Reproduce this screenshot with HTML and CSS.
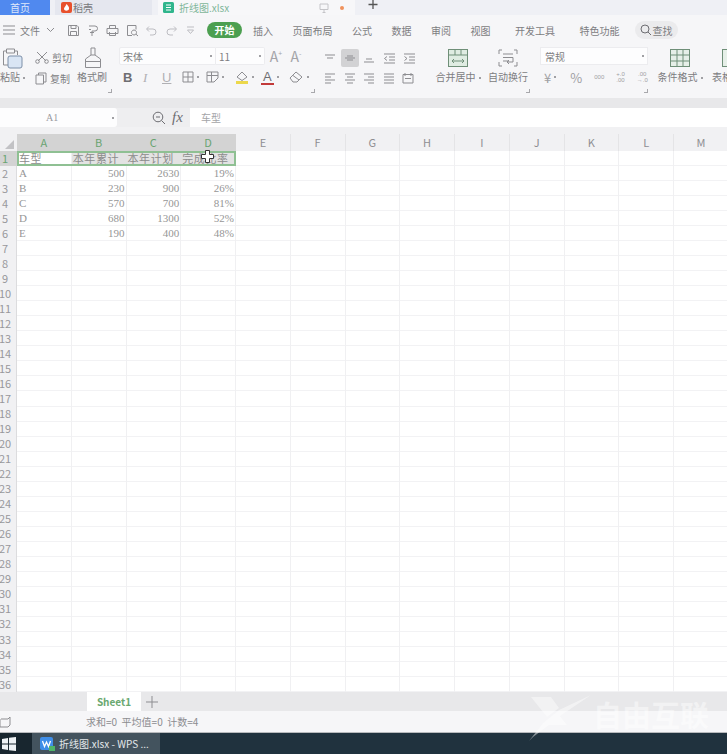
FILE: index.html
```html
<!DOCTYPE html>
<html lang="zh">
<head>
    <meta charset="UTF-8">
    <title>折线图.xlsx - WPS</title>
    <link rel="stylesheet" href="styles.css">
</head>
<body>
    <div class="tabbar">
        <div class="tab home">首页</div>
        <div class="tab shell">
            <svg class="tab-logo" width="11" height="11" viewBox="0 0 11 11"><rect width="11" height="11" rx="2" fill="#e8502c"/><path d="M5.5 2C7 4 8.5 5 8 7 7.500 9 3.500 9.500 3 7 2.800 5.500 4.500 4.500 5.500 2Z" fill="#fff"/></svg>
            稻壳
        </div>
        <div class="tab doc">
            <svg class="tab-logo" width="11" height="11" viewBox="0 0 11 11"><rect width="11" height="11" rx="1.500" fill="#2fb58c"/><path d="M3 3H8M3 5.500H8M8 8H3" stroke="#fff" stroke-width="1.200" fill="none"/></svg>
            <span class="doc-name">折线图.xlsx</span>
            <svg class="doc-mark" width="10" height="10" viewBox="0 0 10 10"><path d="M1 1H9V6.500H1ZM5 6.500V9.500M3.500 9.500H6.500" stroke="#c4c4c8" fill="none"/></svg>
            <span class="doc-dot"></span>
        </div>
        <svg class="tab-add" width="10" height="10" viewBox="0 0 10 10"><path d="M5 0V9M.5 4.500H9.500" stroke="#555" stroke-width="1.300" fill="none"/></svg>
    </div>

    <div class="menubar">
        <svg class="ic burger" width="12" height="10" viewBox="0 0 12 10"><path d="M0 1H12M0 5H12M0 9H12"/></svg>
        <span class="file-menu">文件</span>
        <svg class="ic chev" width="9" height="6" viewBox="0 0 9 6"><path d="M1 1L4.500 4.500 8 1"/></svg>
        <div class="quick">
            <svg class="ic" width="13" height="13" viewBox="0 0 13 13"><path d="M1.500 1.500H10L11.500 3V11.500H1.500ZM4 1.500V4.500H9V1.500M3.500 11.500V7.500H9.500V11.500"/></svg>
            <svg class="ic" width="13" height="13" viewBox="0 0 13 13"><path d="M2 2H8A2.500 2.500 0 0 1 8 7H5V12M2 5.500H4M3 8.500H7"/></svg>
            <svg class="ic" width="13" height="13" viewBox="0 0 13 13"><path d="M3.500 4V1.500H9.500V4M1 4.500H12V9.500H1ZM3.500 8V11.500H9.500V8"/></svg>
            <svg class="ic" width="13" height="13" viewBox="0 0 13 13"><path d="M10 5.500V1.500H1.500V11.500H6M8 6A2.500 2.500 0 1 0 8.010 6M9.800 10L12 12"/></svg>
            <svg class="ic faint" width="13" height="13" viewBox="0 0 13 13"><path d="M2 5H8A3 3 0 0 1 8 11H5M4 2.500L1.500 5 4 7.500"/></svg>
            <svg class="ic faint" width="13" height="13" viewBox="0 0 13 13"><path d="M11 5H5A3 3 0 0 0 5 11H8M9 2.500L11.500 5 9 7.500"/></svg>
            <svg class="ic faint" width="13" height="13" viewBox="0 0 13 13"><path d="M3 3H10M3.500 6H9.500L6.500 9.500Z"/></svg>
        </div>
        <div class="start">开始</div>
        <nav class="menu">
            <span>插入</span>
            <span>页面布局</span>
            <span>公式</span>
            <span>数据</span>
            <span>审阅</span>
            <span>视图</span>
            <span class="wide">开发工具</span>
            <span class="wide">特色功能</span>
        </nav>
        <div class="find">
            <svg class="ic dark" width="12" height="12" viewBox="0 0 12 12"><circle cx="5" cy="5" r="4"/><path d="M8 8L11 11"/></svg>
            查找
        </div>
    </div>

    <div class="ribbon">
        <div class="group paste">
            <svg class="ic" width="21" height="22" viewBox="0 0 21 22"><path d="M4 3H1.500V17H6M13 3H15.500V7M4.500 1H12.500V5H4.500Z"/><rect x="6" y="8" width="14" height="12" rx="2" fill="#d9e5f4" stroke="#7d8fa8"/></svg>
            <div class="lbl">粘贴<i class="dot"></i></div>
        </div>
        <div class="group clip">
            <div class="clip-row">
                <svg class="ic" width="14" height="13" viewBox="0 0 14 13"><path d="M2 1L11 10M12 1L3 10"/><circle cx="2.500" cy="10.500" r="1.800"/><circle cx="11.500" cy="10.500" r="1.800"/></svg>
                剪切
            </div>
            <div class="clip-row">
                <svg class="ic" width="12" height="13" viewBox="0 0 12 13"><path d="M3.500 3V1H11V10H9M1 3H8.500V12H1Z"/></svg>
                复制
            </div>
        </div>
        <div class="group brush">
            <svg class="ic" width="18" height="22" viewBox="0 0 18 22"><path d="M7 1H11V8H7ZM7 8L1.500 12V20.500H16.500V12L11 8M1.500 14.500H16.500"/></svg>
            <div class="lbl">格式刷</div>
            <i class="corner"></i>
        </div>
        <div class="group font">
            <div class="font-top">
                <div class="select font-name">宋体<i class="dot"></i></div>
                <div class="select font-size">11<i class="dot"></i></div>
                <span class="grow">A<sup>+</sup></span>
                <span class="grow">A<sup>-</sup></span>
            </div>
            <div class="font-bottom">
                <span class="fmt bold">B</span>
                <span class="fmt ital">I</span>
                <span class="fmt under">U</span>
                <svg class="ic" width="12" height="12" viewBox="0 0 12 12"><path d="M1 1H11V11H1ZM1 6H11M6 1V11"/></svg><i class="dot"></i>
                <svg class="ic" width="13" height="12" viewBox="0 0 13 12"><path d="M1 1H12V7L8 11H1ZM1 4.500H12M5.500 1V11"/></svg><i class="dot"></i>
                <svg class="ic fill-ic" width="14" height="13" viewBox="0 0 14 13"><path d="M7 1L12 6 7 9.500 2 6Z"/><rect x="1" y="10" width="12" height="3" fill="#ecd84c" stroke="none"/></svg><i class="dot"></i>
                <span class="fmt color-a">A</span><i class="dot"></i>
                <svg class="ic erase-ic" width="15" height="12" viewBox="0 0 15 12"><path d="M1 7L7 1 13 6 8 11H4ZM4 4.500L10 9"/></svg><i class="dot"></i>
            </div>
            <i class="corner"></i>
        </div>
        <div class="group align">
            <div class="align-row">
                <svg class="ic" width="12" height="12" viewBox="0 0 12 12"><path d="M1 3H11M3 6H9"/></svg>
                <span class="on"><svg class="ic" width="12" height="12" viewBox="0 0 12 12"><path d="M1 6H11M3 4H9M3 8H9"/></svg></span>
                <svg class="ic" width="12" height="12" viewBox="0 0 12 12"><path d="M3 7H9M1 10H11"/></svg>
                <svg class="ic" width="13" height="12" viewBox="0 0 13 12"><path d="M1 2H12M6 5H12M6 8H12M1 11H12M4 4.500L1.500 6.500 4 8.500"/></svg>
                <svg class="ic" width="13" height="12" viewBox="0 0 13 12"><path d="M1 2H12M6 5H12M6 8H12M1 11H12M1.500 4.500L4 6.500 1.500 8.500"/></svg>
            </div>
            <div class="align-row">
                <svg class="ic" width="12" height="12" viewBox="0 0 12 12"><path d="M1 2H11M1 5H7M1 8H11M1 11H7"/></svg>
                <svg class="ic" width="12" height="12" viewBox="0 0 12 12"><path d="M1 2H11M3 5H9M1 8H11M3 11H9"/></svg>
                <svg class="ic" width="12" height="12" viewBox="0 0 12 12"><path d="M1 2H11M5 5H11M1 8H11M5 11H11"/></svg>
                <svg class="ic" width="12" height="12" viewBox="0 0 12 12"><path d="M1 2H11M1 5H11M1 8H11M1 11H11"/></svg>
                <svg class="ic" width="12" height="12" viewBox="0 0 12 12"><path d="M1 2.500H11V11H1ZM3 1V4M9 1V4M3 6.500H9"/></svg>
            </div>
        </div>
        <div class="group big merge">
            <svg width="20" height="18" viewBox="0 0 20 18"><rect x=".5" y=".5" width="19" height="17" fill="#dfece2" stroke="#6f8f78"/><path d="M.5 6H19.500M7 .5V6M13 .5V6M4 12H16M4 12L6 10M4 12L6 14M16 12L14 10M16 12L14 14" stroke="#6f8f78" fill="none"/></svg>
            <div class="lbl">合并居中<i class="dot"></i></div>
        </div>
        <div class="group big wrap">
            <svg class="ic" width="20" height="18" viewBox="0 0 20 18"><path d="M1 5V1H4M16 1H19V5M1 13V17H4M19 13V17H16M5 5H15M5 8.500H15M5 12H11M15 8.500V13H9M11 11L9 13 11 15"/></svg>
            <div class="lbl">自动换行</div>
            <i class="corner"></i>
        </div>
        <div class="group number">
            <div class="select num-format">常规<i class="dot"></i></div>
            <div class="num-row">
                <span class="num-cur">¥</span><i class="dot"></i>
                <span class="num-pct">%</span>
                <span class="num-small">000</span>
                <span class="num-small">+.0<br>.00</span>
                <span class="num-small">.00<br>→.0</span>
            </div>
            <i class="corner"></i>
        </div>
        <div class="group big cond">
            <svg width="20" height="18" viewBox="0 0 20 18"><rect x=".5" y=".5" width="19" height="17" fill="#e6efe8" stroke="#6f8f78"/><path d="M.5 6H19.500M.5 12H19.500M7 .5V17.500M13 .5V17.500" stroke="#6f8f78" fill="none"/></svg>
            <div class="lbl">条件格式<i class="dot"></i></div>
        </div>
        <div class="group big table-style">
            <svg width="20" height="18" viewBox="0 0 20 18"><rect x=".5" y=".5" width="19" height="17" fill="#e6efe8" stroke="#6f8f78"/></svg>
            <div class="lbl">表格样式</div>
        </div>
    </div>

    <div class="formula">
        <div class="namebox">A1<i class="dot"></i></div>
        <svg class="ic dark zoom-ic" width="14" height="14" viewBox="0 0 14 14"><circle cx="6" cy="6" r="4.800"/><path d="M9.500 9.500L13 13M4 6H8"/></svg>
        <span class="fx">fx</span>
        <div class="fbox">车型</div>
    </div>

    <div class="sheet-head">
        <div class="corner-cell"><i></i></div>
        <div class="col on">A</div>
        <div class="col on">B</div>
        <div class="col on">C</div>
        <div class="col on">D</div>
        <div class="col">E</div>
        <div class="col">F</div>
        <div class="col">G</div>
        <div class="col">H</div>
        <div class="col">I</div>
        <div class="col">J</div>
        <div class="col">K</div>
        <div class="col">L</div>
        <div class="col">M</div>
    </div>

    <div class="sheet">
        <div class="rownums">
            <div class="on"><b>1</b></div><div><b>2</b></div><div><b>3</b></div><div><b>4</b></div><div><b>5</b></div><div><b>6</b></div>
            <div><b>7</b></div><div><b>8</b></div><div><b>9</b></div><div><b>10</b></div><div><b>11</b></div><div><b>12</b></div>
            <div><b>13</b></div><div><b>14</b></div><div><b>15</b></div><div><b>16</b></div><div><b>17</b></div><div><b>18</b></div>
            <div><b>19</b></div><div><b>20</b></div><div><b>21</b></div><div><b>22</b></div><div><b>23</b></div><div><b>24</b></div>
            <div><b>25</b></div><div><b>26</b></div><div><b>27</b></div><div><b>28</b></div><div><b>29</b></div><div><b>30</b></div>
            <div><b>31</b></div><div><b>32</b></div><div><b>33</b></div><div><b>34</b></div><div><b>35</b></div><div><b>36</b></div>
        </div>
        <div class="cells">
            <div class="row sel">
                <span class="txt">车型</span><span class="head hi">本年累计</span><span class="head hi">本年计划</span><span class="head hi">完成比率</span>
            </div>
            <div class="row"><span class="txt">A</span><span class="num">500</span><span class="num">2630</span><span class="num">19%</span></div>
            <div class="row"><span class="txt">B</span><span class="num">230</span><span class="num">900</span><span class="num">26%</span></div>
            <div class="row"><span class="txt">C</span><span class="num">570</span><span class="num">700</span><span class="num">81%</span></div>
            <div class="row"><span class="txt">D</span><span class="num">680</span><span class="num">1300</span><span class="num">52%</span></div>
            <div class="row"><span class="txt">E</span><span class="num">190</span><span class="num">400</span><span class="num">48%</span></div>
            <svg class="cursor" width="13" height="13" viewBox="0 0 13 13"><path d="M4.500 .5H8.500V4.500H12.500V8.500H8.500V12.500H4.500V8.500H.5V4.500H4.500Z" fill="#fff" stroke="#333"/></svg>
        </div>
    </div>

    <div class="sheet-tabs">
        <div class="sheet-tab">Sheet1</div>
        <svg class="ic" width="12" height="12" viewBox="0 0 12 12"><path d="M6 0V12M0 6H12"/></svg>
    </div>

    <div class="status">
        <svg class="ic" width="11" height="12" viewBox="0 0 11 12"><path d="M1 3H8L10 1V9L8 11H0V3"/></svg>
        <span class="stat-text">求和=0&nbsp; 平均值=0&nbsp; 计数=4</span>
    </div>

    <div class="taskbar">
        <div class="start-btn">
            <svg width="14" height="14" viewBox="0 0 14 14"><path d="M0 2L6 1V6.500H0ZM7 .8L14 0V6.500H7ZM0 7.500H6V13L0 12ZM7 7.500H14V14L7 13.200Z" fill="#eef2f5"/></svg>
        </div>
        <div class="task">
            <svg width="15" height="14" viewBox="0 0 15 14"><rect width="13" height="13" rx="2" fill="#3f8ee8"/><path d="M2.500 4L4.500 9.500 6.500 5 8.500 9.500 10.500 4" stroke="#fff" fill="none" stroke-width="1.300"/><rect x="9" y="9" width="6" height="5" fill="#4fb56a"/></svg>
            折线图.xlsx - WPS ...
        </div>
    </div>

    <div class="watermark">
        <svg width="64" height="46" viewBox="0 0 64 46"><path d="M2 2H22L30 13 18 22ZM62 0L34 19 24 27 4 42 0 46 14 28 30 15Z" fill="#fff"/><path d="M30 20L38 30H18L24 25Z" fill="#fff"/></svg>
        <span>自由互联</span>
    </div>
</body>
</html>
```

FILE: styles.css
```css
*{
    margin: 0;
    padding: 0;
    box-sizing: border-box;
}
html, body{
    width: 727px;
    height: 754px;
    overflow: hidden;
}
body{
    position: relative;
    background: #fff;
    font-family: "Noto Sans CJK SC", "Liberation Sans", sans-serif;
    font-size: 10px;
    color: #7d7d81;
}
i{
    font-style: normal;
}
svg{
    display: block;
}
.ic{
    stroke: #8d8d91;
    fill: none;
    flex: none;
}
.ic.faint{
    stroke: #bdbdc2;
}
.ic.dark{
    stroke: #6d6d72;
}
.dot{
    display: inline-block;
    width: 2px;
    height: 2px;
    margin-left: 3px;
    background: #a0a0a4;
    vertical-align: middle;
}
.corner{
    position: absolute;
    right: 2px;
    bottom: 3px;
    width: 4px;
    height: 4px;
    border-right: 1px solid #a8a8ac;
    border-bottom: 1px solid #a8a8ac;
}

/* top tabs */
.tabbar{
    display: flex;
    height: 15px;
    background: #eff0f5;
    line-height: 11px;
}
.tab{
    display: flex;
    align-items: center;
    height: 15px;
}
.home{
    width: 50px;
    padding-left: 10px;
    background: #5089ef;
    color: #dfe8fb;
}
.shell{
    width: 97px;
    margin-left: 5px;
    padding-left: 6px;
    background: #e5e7ef;
    color: #77777b;
}
.doc{
    width: 197px;
    margin-left: 6px;
    padding-left: 5px;
    background: #f7f7f9;
}
.doc-name{
    margin-left: 4px;
    color: #7fb69a;
}
.tab-logo{
    margin-right: 1px;
}
.doc-mark{
    margin-left: 90px;
}
.doc-dot{
    width: 4px;
    height: 4px;
    margin-left: 11px;
    border-radius: 50%;
    background: #f0925c;
}
.tab-add{
    margin-left: 13px;
}

/* menu row */
.menubar{
    display: flex;
    align-items: center;
    height: 30px;
    padding-left: 3px;
    background: #f6f6f8;
}
.file-menu{
    margin-left: 5px;
}
.chev{
    margin-left: 6px;
}
.quick{
    display: flex;
    gap: 6.500px;
    margin-left: 12px;
}
.start{
    width: 35px;
    height: 16px;
    margin-left: 10px;
    border-radius: 8px;
    background: #4c9f50;
    color: #fff;
    font-weight: 700;
    line-height: 16px;
    text-align: center;
}
.menu{
    display: flex;
    gap: 19.500px;
    margin-left: 11px;
}
.menu .wide{
    margin-left: 5px;
}
.find{
    display: flex;
    align-items: center;
    gap: 1px;
    height: 18px;
    margin-left: 15px;
    padding: 0 5px;
    border-radius: 9px;
    background: #ebebed;
}

/* ribbon */
.ribbon{
    display: flex;
    height: 53px;
    background: #f6f6f8;
    overflow: hidden;
}
.group{
    position: relative;
    flex: none;
    height: 51px;
}
.lbl{
    line-height: 14px;
    white-space: nowrap;
}
.paste{
    width: 33px;
    padding: 3px 0 0 2px;
}
.paste .lbl{
    margin-left: -2px;
}
.clip{
    width: 44px;
    padding: 2px 0 0 2px;
}
.clip-row{
    display: flex;
    align-items: center;
    gap: 3px;
    height: 21px;
}
.brush{
    width: 37px;
    padding: 2px 0 0 7px;
}
.brush .lbl{
    margin: 1px 0 0 -7px;
}
.font{
    width: 203px;
    padding: 2px 0 0 5px;
}
.font-top{
    display: flex;
    align-items: center;
}
.select{
    display: flex;
    align-items: center;
    justify-content: space-between;
    height: 18px;
    padding: 0 3px;
    background: #fdfdfe;
    border: 1px solid #ececef;
}
.font-name{
    width: 97px;
    border-radius: 2px 0 0 2px;
}
.font-size{
    width: 49px;
    border-left: 0;
    border-radius: 0 2px 2px 0;
}
.grow{
    width: 18px;
    margin-left: 2px;
    font-size: 14px;
    line-height: 18px;
    text-align: center;
    color: #a4a4a8;
}
.grow sup{
    font-size: 7px;
    line-height: 0;
}
.font-bottom{
    display: flex;
    align-items: center;
    height: 20px;
    margin-top: 2px;
    padding-left: 4px;
}
.font-bottom .dot{
    margin: 0 7px 0 3px;
}
.fill-ic{
    margin-left: 4px;
}
.erase-ic{
    margin-left: 3px;
}
.fmt{
    font-family: "Liberation Sans", sans-serif;
    font-size: 13px;
    line-height: 15px;
    color: #8d8d91;
}
.bold{
    width: 20px;
    font-weight: 700;
    color: #6e6e72;
}
.ital{
    width: 19px;
    font-style: italic;
    font-family: "Liberation Serif", serif;
    color: #b0b0b4;
}
.under{
    width: 20px;
    text-decoration: underline;
    color: #b0b0b4;
}
.color-a{
    padding: 0 2px;
    border-bottom: 2px solid #c23a3a;
    line-height: 13px;
    color: #6e6e72;
}
.align{
    width: 115px;
    padding: 3px 0 0 7px;
}
.align-row{
    display: flex;
    align-items: center;
    gap: 7.500px;
    height: 20px;
}
.align-row .on{
    display: flex;
    align-items: center;
    justify-content: center;
    width: 18px;
    height: 18px;
    margin: 0 -3px;
    border-radius: 2px;
    background: #d2d2d4;
}
.big{
    display: flex;
    flex-direction: column;
    align-items: center;
    padding-top: 4px;
}
.big .lbl{
    margin-top: 3px;
}
.merge{
    width: 52px;
}
.wrap{
    width: 48px;
}
.number{
    width: 118px;
    padding: 2px 0 0 8px;
}
.num-format{
    width: 108px;
    padding-left: 4px;
}
.num-row{
    display: flex;
    align-items: center;
    height: 20px;
    margin-top: 2px;
    padding-left: 4px;
    color: #a0a0a4;
}
.num-cur{
    font-size: 13px;
}
.num-pct{
    margin-left: 14px;
    font-size: 13px;
}
.num-small{
    margin-left: 12px;
    font-family: "Liberation Sans", sans-serif;
    font-size: 6px;
    line-height: 6px;
    text-align: center;
}
.cond{
    width: 48px;
    margin-left: 6px;
}
.table-style{
    width: 40px;
    margin-left: 8px;
}

/* formula bar */
.formula{
    display: flex;
    align-items: center;
    height: 36px;
    padding: 10px 0 7px;
    background: linear-gradient(#e8e8ea 0, #e8e8ea 10px, #eeeef0 10px, #eeeef0 29px, #f1f1f3 29px);
}
.namebox{
    display: flex;
    align-items: center;
    justify-content: space-between;
    width: 117px;
    height: 19px;
    padding: 0 3px 0 46px;
    background: #fdfdfe;
    border-radius: 0 3px 3px 0;
    font-family: "Liberation Serif", serif;
    font-size: 10px;
    color: #9a9a9e;
}
.zoom-ic{
    margin-left: 35px;
}
.fx{
    width: 15px;
    margin-left: 6px;
    font-family: "Liberation Serif", serif;
    font-size: 15px;
    font-style: italic;
    line-height: 19px;
    color: #6d6d72;
}
.fbox{
    flex: 1;
    height: 19px;
    margin-left: 3px;
    padding-left: 11px;
    background: #fff;
    line-height: 19px;
    color: #a4a4a8;
}

/* sheet */
.sheet-head{
    display: grid;
    grid-template-columns: 17px repeat(13, 54.750px);
    height: 17px;
    background: #f1f1f3;
}
.corner-cell{
    position: relative;
}
.corner-cell i{
    position: absolute;
    right: 3px;
    bottom: 2px;
    border-left: 9px solid transparent;
    border-bottom: 9px solid #c2c2c5;
}
.col{
    border-right: 1px solid #e4e4e6;
    font-size: 11px;
    line-height: 17px;
    text-align: center;
    color: #8e8e92;
}
.col.on{
    background: #d3d3d3;
    color: #69a471;
    border-right-color: #d3d3d3;
}
.sheet{
    display: flex;
    height: 541px;
}
.rownums{
    flex: none;
    width: 17px;
    background: #f1f1f3;
    border-right: 1px solid #dcdcde;
}
.rownums div{
    display: flex;
    justify-content: center;
    width: 10px;
    height: 15.030px;
    font-size: 11px;
    line-height: 15px;
    color: #98989c;
}
.rownums div.on{
    width: 17px;
    padding-right: 7px;
    background: #d3d3d3;
    color: #69a471;
}
.rownums b{
    flex: none;
    font-weight: 400;
}
.cells{
    position: relative;
    flex: 1;
    background-color: #fff;
    background-image:
        repeating-linear-gradient(to right, transparent 0, transparent 53.750px, #f0f0f2 53.750px, #f0f0f2 54.750px),
        repeating-linear-gradient(to bottom, transparent 0, transparent 14.030px, #f2f2f4 14.030px, #f2f2f4 15.030px);
}
.row{
    display: grid;
    grid-template-columns: repeat(4, 54.750px);
    height: 15.030px;
    width: 219px;
    font-family: "Liberation Serif", "Noto Sans CJK SC", serif;
    font-size: 11px;
    line-height: 15px;
    color: #969696;
}
.row span{
    white-space: nowrap;
}
.txt{
    padding-left: 2px;
}
.num{
    padding-right: 2px;
    text-align: right;
}
.row.sel{
    outline: 2px solid #8fc093;
    outline-offset: -2px;
    font-family: "Noto Sans CJK SC", serif;
    font-size: 11px;
    letter-spacing: .6px;
    color: #8c8c8c;
}
.head{
    padding-left: 1px;
}
.hi{
    background: #e3e3e3;
}
.cursor{
    position: absolute;
    left: 184px;
    top: -1px;
}

/* sheet tabs + status */
.sheet-tabs{
    display: flex;
    align-items: center;
    height: 19px;
    padding-left: 87px;
    background: #e8e8ea;
}
.sheet-tab{
    width: 54px;
    height: 19px;
    margin-right: 5px;
    background: #fff;
    font-size: 10px;
    font-weight: 700;
    line-height: 19px;
    text-align: center;
    color: #6aa870;
}
.status{
    display: flex;
    align-items: center;
    height: 22px;
    background: #f6f6f8;
    border-bottom: 1px solid #b8babd;
}
.stat-text{
    margin-left: 75px;
    color: #8c8c90;
}
.taskbar{
    display: flex;
    height: 21px;
    background: #20323e;
}
.start-btn{
    display: flex;
    align-items: center;
    justify-content: flex-end;
    width: 32px;
    padding-right: 16px;
    background: #18262f;
}
.task{
    display: flex;
    align-items: center;
    gap: 4px;
    width: 128px;
    padding-left: 8px;
    background: #43535e;
    color: #e4e8ea;
}

/* watermark over the status bar */
.watermark{
    position: absolute;
    left: 529px;
    top: 695px;
    display: flex;
    align-items: flex-start;
    opacity: .45;
}
.watermark span{
    margin: 3px 0 0 0;
    font-size: 29px;
    font-weight: 700;
    line-height: 32px;
    color: #fff;
    white-space: nowrap;
}
```
